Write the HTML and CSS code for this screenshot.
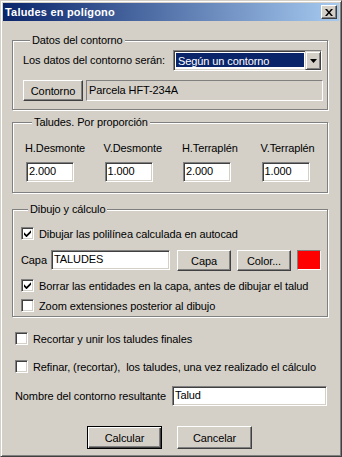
FILE: index.html
```html
<!DOCTYPE html>
<html lang="es">
<head>
  <meta charset="UTF-8">
  <title>Taludes en polígono</title>
  <link rel="stylesheet" href="styles.css">
</head>
<body>
<div class="window">
  <div class="titlebar">
    <span class="title">Taludes en polígono</span>
    <button class="close-btn">
      <svg width="8" height="7" viewBox="0 0 8 7"><path d="M0 0h2l2 2.4 2-2.4h2l-3 3.5 3 3.5h-2l-2-2.4-2 2.4h-2l3-3.5z" fill="#000"/></svg>
    </button>
  </div>

  <div class="dialog">
    <!-- datos del contorno -->
    <div class="group group-contorno">
      <span class="legend">Datos del contorno</span>
      <div class="row row-combo">
        <span class="label">Los datos del contorno serán:</span>
        <div class="combo">
          <span class="combo-text">Según un contorno</span>
          <span class="combo-btn">
            <svg width="7" height="4" viewBox="0 0 7 4"><polygon points="0,0 7,0 3.5,4" fill="#000"/></svg>
          </span>
        </div>
      </div>
      <div class="row row-contorno">
        <button class="btn btn-contorno">Contorno</button>
        <div class="static-field">Parcela HFT-234A</div>
      </div>
    </div>

    <!-- taludes -->
    <div class="group group-taludes">
      <span class="legend">Taludes. Por proporción</span>
      <div class="ratio-grid">
        <div class="ratio">
          <span class="label">H.Desmonte</span>
          <div class="field ratio-field">2.000</div>
        </div>
        <div class="ratio">
          <span class="label">V.Desmonte</span>
          <div class="field ratio-field">1.000</div>
        </div>
        <div class="ratio">
          <span class="label">H.Terraplén</span>
          <div class="field ratio-field">2.000</div>
        </div>
        <div class="ratio">
          <span class="label">V.Terraplén</span>
          <div class="field ratio-field">1.000</div>
        </div>
      </div>
    </div>

    <!-- dibujo -->
    <div class="group group-dibujo">
      <span class="legend">Dibujo y cálculo</span>
      <div class="check-row check-dibujar">
        <span class="check"><svg width="7" height="7" viewBox="0 0 7 7"><path d="M0 2.2l2.5 2.5 4.5-4.5v2.6l-4.5 4.5-2.5-2.5z" fill="#000"/></svg></span>
        <span class="check-label">Dibujar las polilínea calculada en autocad</span>
      </div>
      <div class="row row-capa">
        <span class="capa-label">Capa</span>
        <div class="field capa-field">TALUDES</div>
        <button class="btn btn-small">Capa</button>
        <button class="btn btn-small">Color...</button>
        <span class="swatch"></span>
      </div>
      <div class="check-row check-borrar">
        <span class="check"><svg width="7" height="7" viewBox="0 0 7 7"><path d="M0 2.2l2.5 2.5 4.5-4.5v2.6l-4.5 4.5-2.5-2.5z" fill="#000"/></svg></span>
        <span class="check-label">Borrar las entidades en la capa, antes de dibujar el talud</span>
      </div>
      <div class="check-row check-zoom">
        <span class="check"></span>
        <span class="check-label">Zoom extensiones posterior al dibujo</span>
      </div>
    </div>

    <div class="check-row outer-check check-recortar">
      <span class="check"></span>
      <span class="check-label">Recortar y unir los taludes finales</span>
    </div>
    <div class="check-row outer-check check-refinar">
      <span class="check"></span>
      <span class="check-label">Refinar, (recortar),&nbsp; los taludes, una vez realizado el cálculo</span>
    </div>

    <div class="row row-nombre">
      <span class="label">Nombre del contorno resultante</span>
      <div class="field nombre-field">Talud</div>
    </div>

    <div class="buttons">
      <button class="btn btn-main btn-default">Calcular</button>
      <button class="btn btn-main">Cancelar</button>
    </div>
  </div>
</div>
</body>
</html>
```

FILE: styles.css
```css
body {
  margin: 0;
  background: #d4d0c8;
  font-family: "Liberation Sans", Arial, sans-serif;
  font-size: 11px;
  letter-spacing: -0.1px;
  color: #000;
}

.window {
  width: 342px;
  height: 457px;
  box-sizing: border-box;
  border: 1px solid;
  border-color: #d4d0c8 #404040 #404040 #d4d0c8;
  box-shadow: inset 1px 1px #fff, inset -1px -1px #808080;
  padding: 2px;
  display: flex;
  flex-direction: column;
  background: #d4d0c8;
}

.titlebar {
  height: 18px;
  display: flex;
  align-items: center;
  padding: 0 2px;
  background: linear-gradient(to right, #0a246a, #a6caf0);
}

.title {
  flex: 1;
  color: #fff;
  font-weight: bold;
  letter-spacing: 0.2px;
  line-height: 13px;
}

.close-btn {
  width: 16px;
  height: 14px;
  padding: 0;
  display: flex;
  align-items: center;
  justify-content: center;
  background: #d4d0c8;
  border: 1px solid;
  border-color: #fff #404040 #404040 #fff;
  box-shadow: inset -1px -1px #808080;
}

.dialog {
  flex: 1;
  margin-top: 1px;
  padding: 18px 11px 0 9px;
}

/* group boxes */
.group {
  border: 1px solid #808080;
  box-shadow: inset 1px 1px #fff, 1px 1px #fff;
}

.legend {
  display: table;
  line-height: 13px;
  margin: -7px 0 0 7px;
  padding: 0 2px;
  background: #d4d0c8;
}

.row {
  display: flex;
  align-items: center;
}

.label {
  line-height: 13px;
}

.group-contorno {
  padding: 0 4px 8px 10px;
}

.row-combo {
  margin-top: 3px;
  height: 21px;
  justify-content: space-between;
}

.combo {
  width: 149px;
  height: 21px;
  margin-right: 1px;
  box-sizing: border-box;
  display: flex;
  padding: 2px;
  background: #fff;
  border: 1px solid;
  border-color: #808080 #fff #fff #808080;
  box-shadow: inset 1px 1px #404040, inset -1px -1px #d4d0c8;
}

.combo-text {
  flex: 1;
  margin: 0 1px 1px 0;
  padding-left: 2px;
  background: #0a246a;
  color: #fff;
  line-height: 16px;
}

.combo-btn {
  width: 16px;
  display: flex;
  align-items: center;
  justify-content: center;
  margin: -2px -2px -2px 0;
  box-sizing: border-box;
  border: 1px solid;
  border-color: #d4d0c8 #404040 #404040 #d4d0c8;
  box-shadow: inset 1px 1px #fff, inset -1px -1px #808080;
  background: #d4d0c8;
}

.row-contorno {
  margin-top: 9px;
  height: 21px;
  gap: 3px;
}

.btn {
  font-family: inherit;
  font-size: 11px;
  letter-spacing: -0.1px;
  color: #000;
  padding: 0;
  background: #d4d0c8;
  border: 1px solid;
  border-color: #fff #404040 #404040 #fff;
  box-shadow: inset -1px -1px #808080, inset 1px 1px #d4d0c8;
}

.btn-contorno {
  width: 60px;
  height: 21px;
}

.static-field {
  flex: 1;
  height: 21px;
  box-sizing: border-box;
  padding: 0 2px;
  line-height: 19px;
  border: 1px solid;
  border-color: #808080 #fff #fff #808080;
}

.field {
  box-sizing: border-box;
  height: 20px;
  padding: 0 2px;
  line-height: 16px;
  background: #fff;
  border: 1px solid;
  border-color: #808080 #fff #fff #808080;
  box-shadow: inset 1px 1px #404040, inset -1px -1px #d4d0c8;
}

.group-taludes {
  margin-top: 12px;
  padding: 0 0 10px 12px;
}

.ratio-grid {
  display: grid;
  grid-template-columns: repeat(4, 78.5px);
  margin-top: 13px;
}

.ratio .label {
  display: block;
}

.ratio-field {
  width: 48px;
  margin: 7px 0 0 1px;
}

.group-dibujo {
  margin-top: 16px;
  padding: 0 0 4px 8px;
}

.check-row {
  display: flex;
  align-items: center;
  height: 13px;
}

.check {
  width: 13px;
  height: 13px;
  box-sizing: border-box;
  flex-shrink: 0;
  display: flex;
  align-items: center;
  justify-content: center;
  background: #fff;
  border: 1px solid;
  border-color: #808080 #fff #fff #808080;
  box-shadow: inset 1px 1px #404040, inset -1px -1px #d4d0c8;
}

.check-label {
  margin-left: 5px;
  padding-top: 1px;
  line-height: 13px;
  white-space: pre;
}

.check-dibujar {
  margin-top: 11px;
}

.row-capa {
  margin-top: 10px;
  height: 21px;
  align-items: flex-start;
}

.capa-label {
  width: 30px;
  line-height: 20px;
}

.capa-field {
  width: 119px;
}

.btn-small {
  width: 54px;
  height: 21px;
  margin-left: 6px;
}

.row-capa .btn-small:first-of-type {
  margin-left: 7px;
}

.swatch {
  width: 24px;
  height: 20px;
  margin-left: 6px;
  box-sizing: border-box;
  background: #ff0000;
  border: 1px solid;
  border-color: #808080 #fff #fff #808080;
}

.check-borrar {
  margin-top: 8px;
}

.check-zoom {
  margin-top: 7px;
}

.outer-check {
  margin-left: 3px;
}

.check-recortar {
  margin-top: 15px;
}

.check-refinar {
  margin-top: 15px;
}

.row-nombre {
  margin: 13px 0 0 3px;
  justify-content: space-between;
}

.nombre-field {
  width: 155px;
  margin-right: 1px;
}

.buttons {
  display: flex;
  gap: 15px;
  margin-top: 20px;
  padding-left: 75px;
}

.btn-main {
  width: 75px;
  height: 23px;
}

.btn-default {
  border-color: #000;
  box-shadow: inset 1px 1px #fff, inset -1px -1px #404040, inset -2px -2px #808080;
}
```
